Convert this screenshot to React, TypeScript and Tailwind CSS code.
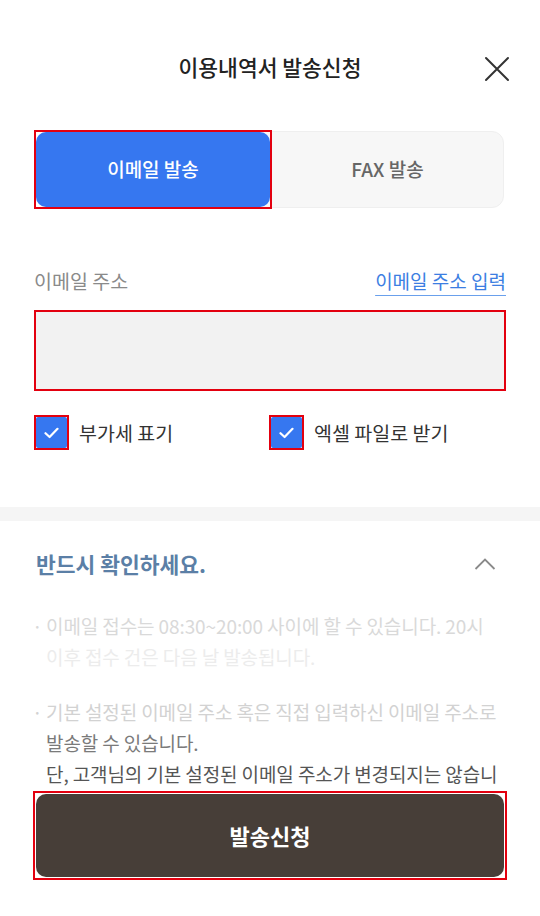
import React from 'react'

const notes = [
  [
    { text: '이메일 접수는 08:30~20:00 사이에 할 수 있습니다. 20시', color: 'text-[#d9d9d9]' },
    { text: '이후 접수 건은 다음 날 발송됩니다.', color: 'text-[#ececec]' },
  ],
  [
    { text: '기본 설정된 이메일 주소 혹은 직접 입력하신 이메일 주소로', color: 'text-[#d2d2d2]' },
    { text: '발송할 수 있습니다.', color: 'text-[#7a7a7a]' },
    { text: '단, 고객님의 기본 설정된 이메일 주소가 변경되지는 않습니', color: 'text-[#555555]' },
    { text: '다.', color: 'text-[#555555]' },
  ],
]

function CheckBox({ label }: { label: string }) {
  return (
    <label className="flex items-center gap-[10px]">
      <span className="flex h-[35px] w-[35px] items-center justify-center border-2 border-[#e3000f]">
        <span className="flex h-[31px] w-[31px] items-center justify-center rounded-[2px] bg-[#3677f0]">
          <svg width="15" height="12" viewBox="0 0 15 12" fill="none">
            <path d="M1.5 6.2 L5.6 10 L13.5 1.8" stroke="white" strokeWidth="2.2" strokeLinecap="round" strokeLinejoin="round" />
          </svg>
        </span>
      </span>
      <span className="text-[19.5px] text-[#333]">{label}</span>
    </label>
  )
}

export default function App() {
  return (
    <div
      className="relative h-[916px] w-full overflow-hidden bg-white"
      style={{ fontFamily: '"Noto Sans CJK KR", "Noto Sans", sans-serif' }}
    >
      <header className="relative flex h-[134px] items-center justify-center">
        <h1 className="text-[21.5px] font-medium text-[#222]">이용내역서 발송신청</h1>
        <button className="absolute right-[28px] top-[54px] p-[2px]" aria-label="닫기">
          <svg width="26" height="26" viewBox="0 0 26 26" fill="none">
            <path d="M2 2 L24 24 M24 2 L2 24" stroke="#333" strokeWidth="2" strokeLinecap="round" />
          </svg>
        </button>
      </header>

      <div className="mx-[36px] -mt-[3px] flex h-[77px] rounded-[12px] border border-[#efefef] bg-[#f7f7f7]">
        <div className="-my-[2px] -ml-[3px] w-[238px] border-2 border-[#e3000f]">
          <button className="flex h-full w-full items-center justify-center rounded-[10px] bg-[#3677f0] text-[19px] font-medium text-white">
            이메일 발송
          </button>
        </div>
        <button className="flex flex-1 items-center justify-center text-[19px] font-medium text-[#666]">
          FAX 발송
        </button>
      </div>

      <div className="mx-[34px] mt-[58px] flex h-[30px] items-center justify-between">
        <span className="text-[19.5px] text-[#8a8a8a]">이메일 주소</span>
        <a className="text-[19px] text-[#3c7ee2] underline decoration-[#6aa0ec] underline-offset-[6px]">
          이메일 주소 입력
        </a>
      </div>

      <div className="mx-[34px] mt-[14px] h-[81px] border-2 border-[#e3000f] bg-[#f2f2f2]" />

      <div className="mx-[34px] mt-[24px] grid grid-cols-2 pr-[2px]">
        <CheckBox label="부가세 표기" />
        <CheckBox label="엑셀 파일로 받기" />
      </div>

      <div className="mt-[57px] h-[14px] bg-[#f5f5f5]" />

      <section className="px-[36px]">
        <div className="flex h-[86px] items-center justify-between">
          <h2 className="text-[21.5px] font-semibold text-[#5b7fa6]">반드시 확인하세요.</h2>
          <svg className="mr-[8px]" width="22" height="14" viewBox="0 0 22 14" fill="none">
            <path d="M1.5 12 L11 2.5 L20.5 12" stroke="#8a8a8a" strokeWidth="1.8" />
          </svg>
        </div>

        <ul className="mt-[3px] flex flex-col gap-[24px]">
          {notes.map((lines, i) => (
            <li key={i} className="relative pl-[10px] text-[19px] leading-[31px] tracking-[-0.1px]">
              <span className={`absolute left-[-4px] top-0 ${lines[0].color}`}>·</span>
              {lines.map((l) => (
                <p key={l.text} className={`whitespace-nowrap ${l.color}`}>
                  {l.text}
                </p>
              ))}
            </li>
          ))}
        </ul>
      </section>

      <div className="absolute bottom-0 left-0 right-0 h-[125px] bg-white px-[33px]">
        <div className="border-2 border-[#e3000f] p-px">
          <button className="flex h-[83px] w-full items-center justify-center rounded-[10px] bg-[#473e38] text-[22px] font-semibold text-white">
            발송신청
          </button>
        </div>
      </div>
    </div>
  )
}
